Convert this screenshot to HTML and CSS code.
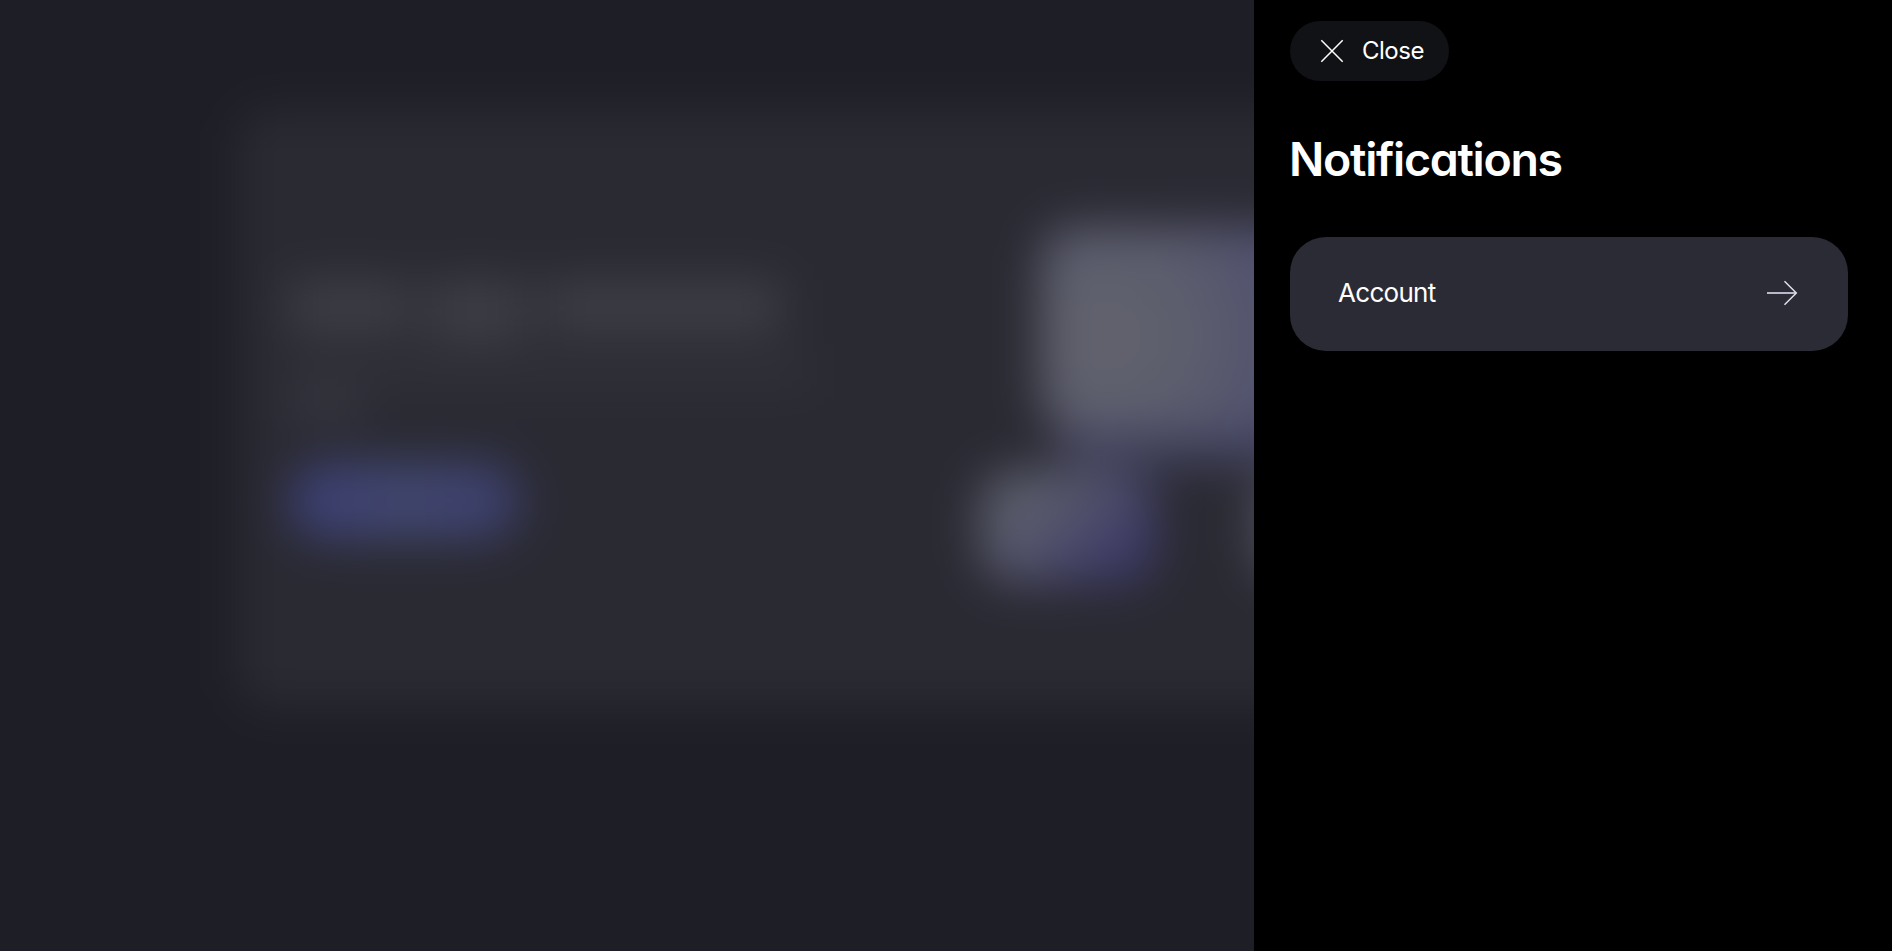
FILE: index.html
```html
<!DOCTYPE html>
<html lang="en">
<head>
<meta charset="utf-8">
<title>Notifications</title>
<link rel="stylesheet" href="styles.css">
</head>
<body>
<div class="app">
  <main class="scene" aria-hidden="true">
    <div class="hero">
      <div class="copy">
        <div class="headline"><span class="word w1"></span><span class="word w2"></span><span class="word w3"></span></div>
        <div class="line"></div>
        <div class="line short"></div>
        <div class="cta"></div>
      </div>
      <div class="art">
        <span class="glow"></span>
        <span class="tile main"></span>
        <span class="tile left"></span>
        <span class="tile right"></span>
      </div>
    </div>
  </main>
  <aside class="drawer">
    <button class="close" type="button">
      <svg class="close-icon" viewBox="0 0 24 24" width="24" height="24"><path d="M1.3 1.3 22.7 22.7M22.7 1.3 1.3 22.7"/></svg>
      <span class="label">Close</span>
    </button>
    <h1 class="title">Notifications</h1>
    <a class="item">
      <span class="label">Account</span>
      <svg class="arrow" viewBox="0 0 32 26" width="32" height="26"><path class="shaft" d="M1 13H30"/><path d="M18.5 1.2 30.3 13 18.5 24.8"/></svg>
    </a>
  </aside>
</div>
</body>
</html>
```
FILE: styles.css
```css
* { box-sizing: border-box; }
body { margin: 0; background: #1e1e27; font-family: Inter, "Liberation Sans", sans-serif; font-feature-settings: "cv11"; font-optical-sizing: none; }
.app { position: relative; display: flow-root; height: 951px; overflow: hidden; background: #1e1e27; }
/* The scene bleeds past the viewport so the blur has no visible rim. */
.scene { height: 1151px; margin: -100px; padding: 210px 0 0 337px; background: #1e1e27; filter: blur(23px); }
.hero { display: flex; width: 1418px; height: 597px; border-radius: 30px; background: #2a2a33; }
.copy { width: 663px; padding: 170px 0 0 51px; }
.headline { display: flex; gap: 16px; height: 54px; margin-bottom: 24px; }
.word { background: #3d3d46; }
.w1 { width: 122px; }
.w2 { width: 102px; height: 62px; }
.w3 { width: 238px; }
.line { width: 525px; height: 26px; margin-bottom: 8px; background: #32323b; }
.line.short { width: 75px; height: 30px; margin-bottom: 40px; background: #363640; }
.cta { width: 232px; height: 78px; border-radius: 40px; background: linear-gradient(90deg, #3b3e73, #41466e 50%, #3c3f6d); }
.art { position: relative; flex: 1; }
.tile { position: absolute; border-radius: 36px; }
.glow { position: absolute; left: 160px; top: 310px; width: 300px; height: 44px; background: #42425f; }
.main { left: 140px; top: 116px; width: 440px; height: 206px; background: radial-gradient(circle at 65px 110px, #60616d 12%, #57586d 34%, #515170 46%, #444069 75%); }
.left { left: 80px; top: 360px; width: 177px; height: 114px; background: linear-gradient(135deg, #5a5c6b 28%, #4e4d6b 54%, #3c3a66 78%); }
.right { left: 355px; top: 360px; width: 175px; height: 112px; background: #50525f; }
.drawer { position: absolute; top: 0; right: 0; bottom: 0; width: 638px; display: flex; flex-direction: column; align-items: flex-start; padding: 21px 44px 0 36px; background: #000; color: #fff; }
.close { display: flex; align-items: center; gap: 18px; width: 159px; height: 60px; padding: 0 0 0 30px; border: 0; border-radius: 30px; background: #111216; color: #fff; font: inherit; font-feature-settings: inherit; font-size: 24px; letter-spacing: -0.5px; }
.close-icon, .arrow { flex: none; fill: none; stroke: #fff; stroke-width: 1.5; }
.label { padding-bottom: 1px; font-weight: 430; }
.title { margin: 50px 0 0 -1px; height: 56px; font-size: 46.5px; line-height: 56px; font-weight: 560; letter-spacing: -1.3px; }
.item { display: flex; align-items: center; justify-content: space-between; width: 558px; height: 114px; margin-top: 50px; padding: 0 50px 2px 48px; border-radius: 36px; background: #2b2b36; font-size: 26px; letter-spacing: -0.7px; }
.arrow { stroke: #dfdfe8; }
.shaft { stroke: #b9b8c8; stroke-width: 2; }
```
